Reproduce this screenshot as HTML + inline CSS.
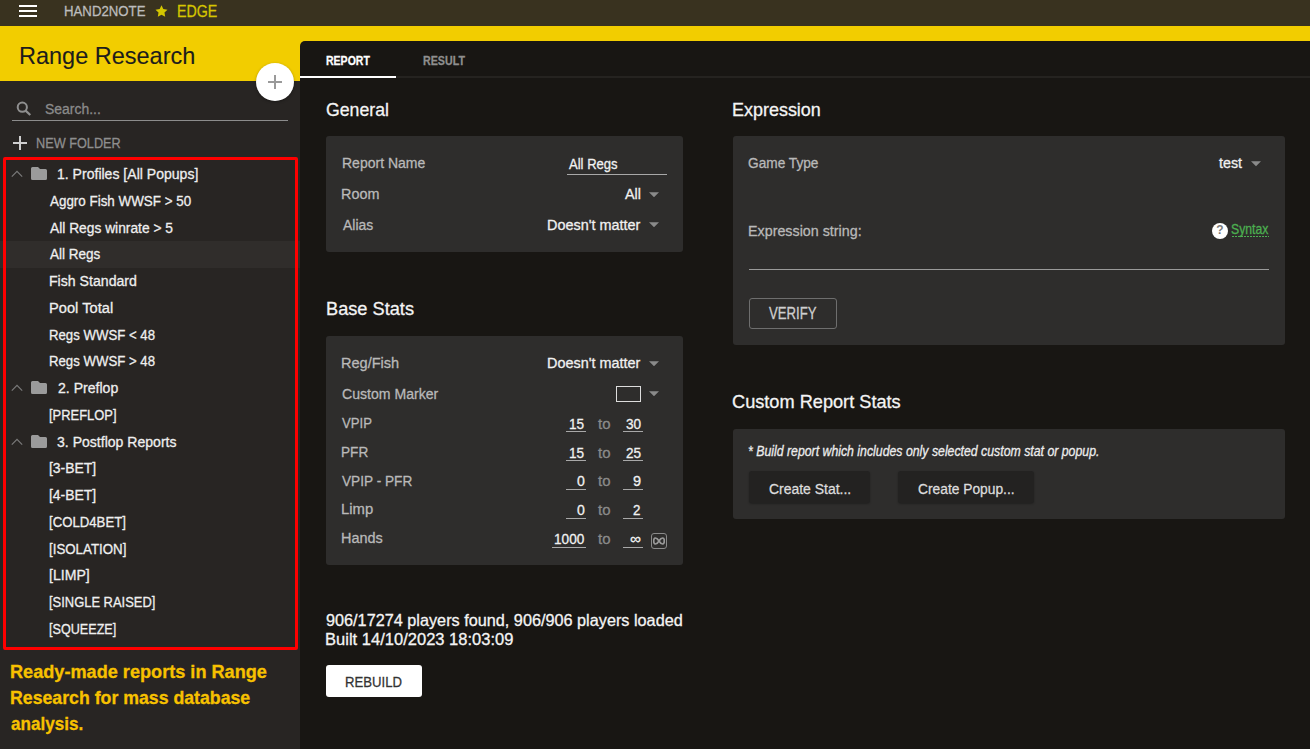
<!DOCTYPE html><html><head><meta charset="utf-8"><style>html,body{margin:0;padding:0}body{width:1310px;height:749px;overflow:hidden;position:relative;background:#181613;font-family:"Liberation Sans",sans-serif}.t{position:absolute;white-space:nowrap;transform-origin:0 0;-webkit-text-stroke:0.3px currentColor}</style></head><body>

<div style="position:absolute;left:0;top:0;width:1310px;height:26px;background:#39321f"></div>
<div style="position:absolute;left:19px;top:5px;width:18px;height:2px;background:#fff"></div>
<div style="position:absolute;left:19px;top:10px;width:18px;height:2px;background:#fff"></div>
<div style="position:absolute;left:19px;top:15px;width:18px;height:2px;background:#fff"></div>
<svg style="position:absolute;left:155px;top:5px" width="13" height="12" viewBox="0 0 24 23"><path d="M12 0.5l3.5 7.3 8 1.1-5.8 5.6 1.4 8L12 18.7l-7.1 3.8 1.4-8L0.5 8.9l8-1.1z" fill="#d4c600"/></svg>
<div style="position:absolute;left:0;top:26px;width:1310px;height:55px;background:#f2cd00"></div>
<div style="position:absolute;left:0;top:81px;width:300px;height:668px;background:#282523"></div>
<div style="position:absolute;left:300px;top:41px;width:1010px;height:708px;background:#181613;border-top-left-radius:5px"></div>
<div style="position:absolute;left:396px;top:76px;width:914px;height:2px;background:#252320"></div>
<div style="position:absolute;left:300px;top:76px;width:96px;height:2px;background:#ffffff"></div>
<div style="position:absolute;left:256px;top:63px;width:38px;height:38px;border-radius:50%;background:#fff;box-shadow:0 1px 3px rgba(0,0,0,.35)"></div>
<div style="position:absolute;left:268px;top:81.2px;width:14px;height:1.6px;background:#9a9a9a"></div>
<div style="position:absolute;left:274.2px;top:75px;width:1.6px;height:14px;background:#9a9a9a"></div>
<svg style="position:absolute;left:16px;top:101px" width="16" height="15" viewBox="0 0 16 15"><circle cx="6.3" cy="6.2" r="4.6" stroke="#8f8f8f" stroke-width="2" fill="none"/><path d="M9.6 9.6L14.3 14" stroke="#8f8f8f" stroke-width="2.2"/></svg>
<div style="position:absolute;left:12px;top:120px;width:276px;height:1px;background:#8c8c8c"></div>
<div style="position:absolute;left:13px;top:142px;width:14px;height:1.6px;background:#cfcfcf"></div>
<div style="position:absolute;left:19.2px;top:136px;width:1.6px;height:14px;background:#cfcfcf"></div>
<div style="position:absolute;left:0;top:241px;width:300px;height:27px;background:#302d2b"></div>
<div style="position:absolute;left:3px;top:157px;width:289px;height:487px;border:3px solid #ff0000;border-radius:2px"></div>
<svg style="position:absolute;left:11px;top:170.00px" width="12" height="8" viewBox="0 0 12 8"><path d="M0.8 6.6L6 1.4l5.2 5.2" stroke="#7a7a7a" stroke-width="1.2" fill="none"/></svg>
<svg style="position:absolute;left:31px;top:167.00px" width="16" height="13" viewBox="0 0 16 13"><path d="M1.5 0h5.5l2 2h5.5a1.5 1.5 0 0 1 1.5 1.5v8a1.5 1.5 0 0 1-1.5 1.5h-13A1.5 1.5 0 0 1 0 11.5v-10A1.5 1.5 0 0 1 1.5 0z" fill="#9b9b9b"/></svg>
<svg style="position:absolute;left:11px;top:384.00px" width="12" height="8" viewBox="0 0 12 8"><path d="M0.8 6.6L6 1.4l5.2 5.2" stroke="#7a7a7a" stroke-width="1.2" fill="none"/></svg>
<svg style="position:absolute;left:31px;top:381.00px" width="16" height="13" viewBox="0 0 16 13"><path d="M1.5 0h5.5l2 2h5.5a1.5 1.5 0 0 1 1.5 1.5v8a1.5 1.5 0 0 1-1.5 1.5h-13A1.5 1.5 0 0 1 0 11.5v-10A1.5 1.5 0 0 1 1.5 0z" fill="#9b9b9b"/></svg>
<svg style="position:absolute;left:11px;top:437.50px" width="12" height="8" viewBox="0 0 12 8"><path d="M0.8 6.6L6 1.4l5.2 5.2" stroke="#7a7a7a" stroke-width="1.2" fill="none"/></svg>
<svg style="position:absolute;left:31px;top:434.50px" width="16" height="13" viewBox="0 0 16 13"><path d="M1.5 0h5.5l2 2h5.5a1.5 1.5 0 0 1 1.5 1.5v8a1.5 1.5 0 0 1-1.5 1.5h-13A1.5 1.5 0 0 1 0 11.5v-10A1.5 1.5 0 0 1 1.5 0z" fill="#9b9b9b"/></svg>

<div style="position:absolute;left:326px;top:136px;width:357px;height:116px;background:#2e2d2c;border-radius:3px"></div>
<div style="position:absolute;left:567px;top:174px;width:100px;height:1px;background:#a8a8a8"></div>
<div style="position:absolute;left:326px;top:336px;width:357px;height:229px;background:#2e2d2c;border-radius:3px"></div>
<div style="position:absolute;left:616px;top:386px;width:23px;height:14px;border:1px solid #dddddd"></div>
<div style="position:absolute;left:326px;top:665px;width:96px;height:32px;background:#ffffff;border-radius:3px"></div>
<div style="position:absolute;left:733px;top:136px;width:552px;height:209px;background:#2e2d2c;border-radius:3px"></div>
<div style="position:absolute;left:749px;top:269px;width:520px;height:1px;background:#9a9a9a"></div>
<div style="position:absolute;left:1212px;top:223px;width:16px;height:16px;border-radius:50%;background:#ffffff"></div>
<div style="position:absolute;left:1212px;top:223px;width:16px;height:16px;line-height:16px;text-align:center;font:700 12px 'Liberation Sans',sans-serif;color:#7a7a7a">?</div>
<div style="position:absolute;left:1232px;top:236px;width:37px;height:1px;background:repeating-linear-gradient(90deg,#4caf50 0 2px,transparent 2px 3px)"></div>
<div style="position:absolute;left:749px;top:298px;width:86px;height:29px;border:1px solid #6e6e6e;border-radius:3px"></div>
<div style="position:absolute;left:733px;top:429px;width:552px;height:90px;background:#2e2d2c;border-radius:3px"></div>
<div style="position:absolute;left:748.5px;top:471px;width:121px;height:32px;background:#232221;border-radius:3px;box-shadow:0 1px 2px rgba(0,0,0,.3)"></div>
<div style="position:absolute;left:897.5px;top:471px;width:136px;height:32px;background:#232221;border-radius:3px;box-shadow:0 1px 2px rgba(0,0,0,.3)"></div>
<div style="position:absolute;left:651px;top:533px;width:14px;height:14px;border:1px solid #8a8a8a;border-radius:3px"></div>
<svg style="position:absolute;left:649px;top:191.7px" width="10" height="5.5" viewBox="0 0 10 5"><path d="M0 0h10L5 5z" fill="#8a8a8a"/></svg>
<svg style="position:absolute;left:649px;top:221.8px" width="10" height="5.5" viewBox="0 0 10 5"><path d="M0 0h10L5 5z" fill="#8a8a8a"/></svg>
<svg style="position:absolute;left:649px;top:360.7px" width="10" height="5.5" viewBox="0 0 10 5"><path d="M0 0h10L5 5z" fill="#8a8a8a"/></svg>
<svg style="position:absolute;left:649px;top:390.7px" width="10" height="5.5" viewBox="0 0 10 5"><path d="M0 0h10L5 5z" fill="#8a8a8a"/></svg>
<svg style="position:absolute;left:1251px;top:161px" width="10" height="5.5" viewBox="0 0 10 5"><path d="M0 0h10L5 5z" fill="#8a8a8a"/></svg>
<div style="position:absolute;left:566px;top:431px;width:20px;height:1px;background:#a8a8a8"></div><div style="position:absolute;left:623px;top:431px;width:20px;height:1px;background:#a8a8a8"></div>
<div style="position:absolute;left:566px;top:460px;width:20px;height:1px;background:#a8a8a8"></div><div style="position:absolute;left:623px;top:460px;width:20px;height:1px;background:#a8a8a8"></div>
<div style="position:absolute;left:566px;top:489px;width:20px;height:1px;background:#a8a8a8"></div><div style="position:absolute;left:623px;top:489px;width:20px;height:1px;background:#a8a8a8"></div>
<div style="position:absolute;left:566px;top:518px;width:20px;height:1px;background:#a8a8a8"></div><div style="position:absolute;left:623px;top:518px;width:20px;height:1px;background:#a8a8a8"></div>
<div style="position:absolute;left:552px;top:547px;width:34px;height:1px;background:#a8a8a8"></div><div style="position:absolute;left:623px;top:547px;width:20px;height:1px;background:#a8a8a8"></div>
<svg style="position:absolute;left:653px;top:537px" width="12" height="8" viewBox="0 0 12 8"><path d="M6 4C4.5 1.5 3.2 1 2.3 1 1.3 1 .7 2.2.7 4s.6 3 1.6 3C3.2 7 4.5 6.5 6 4s2.8-3 3.7-3c1 0 1.6 1.2 1.6 3s-.6 3-1.6 3C8.8 7 7.5 6.5 6 4z" stroke="#9a9a9a" stroke-width="1.7" fill="none"/></svg>

<div class="t" id="t0" style="left:63.54px;top:3.10px;font-size:15.5px;line-height:15.5px;color:#bcbcbc;transform:scaleX(0.8522);">HAND2NOTE</div>
<div class="t" id="t1" style="left:177.03px;top:3.01px;font-size:16.5px;line-height:16.5px;color:#d6c600;transform:scaleX(0.8605);">EDGE</div>
<div class="t" id="t2" style="left:19.03px;top:43.90px;font-size:24px;line-height:24px;color:#1c1c1c;-webkit-text-stroke:0.1px currentColor;transform:scaleX(0.9790);">Range Research</div>
<div class="t" id="t3" style="left:44.65px;top:101.00px;font-size:15.5px;line-height:15.5px;color:#8b8b8b;transform:scaleX(0.8988);">Search...</div>
<div class="t" id="t4" style="left:35.90px;top:135.01px;font-size:15.5px;line-height:15.5px;color:#8e8e8e;transform:scaleX(0.8200);">NEW FOLDER</div>
<div class="t" id="t5" style="left:56.79px;top:166.01px;font-size:15.5px;line-height:15.5px;color:#efefef;transform:scaleX(0.9062);">1. Profiles [All Popups]</div>
<div class="t" id="t6" style="left:50.29px;top:192.76px;font-size:15.5px;line-height:15.5px;color:#efefef;transform:scaleX(0.8646);">Aggro Fish WWSF &gt; 50</div>
<div class="t" id="t7" style="left:50.30px;top:219.51px;font-size:15.5px;line-height:15.5px;color:#efefef;transform:scaleX(0.8894);">All Regs winrate &gt; 5</div>
<div class="t" id="t8" style="left:50.29px;top:246.26px;font-size:15.5px;line-height:15.5px;color:#efefef;transform:scaleX(0.8720);">All Regs</div>
<div class="t" id="t9" style="left:49.32px;top:273.01px;font-size:15.5px;line-height:15.5px;color:#efefef;transform:scaleX(0.9107);">Fish Standard</div>
<div class="t" id="t10" style="left:49.33px;top:299.76px;font-size:15.5px;line-height:15.5px;color:#efefef;transform:scaleX(0.9462);">Pool Total</div>
<div class="t" id="t11" style="left:49.39px;top:326.51px;font-size:15.5px;line-height:15.5px;color:#efefef;transform:scaleX(0.8514);">Regs WWSF &lt; 48</div>
<div class="t" id="t12" style="left:49.39px;top:353.26px;font-size:15.5px;line-height:15.5px;color:#efefef;transform:scaleX(0.8514);">Regs WWSF &gt; 48</div>
<div class="t" id="t13" style="left:58.10px;top:380.01px;font-size:15.5px;line-height:15.5px;color:#efefef;transform:scaleX(0.9084);">2. Preflop</div>
<div class="t" id="t14" style="left:49.42px;top:406.76px;font-size:15.5px;line-height:15.5px;color:#efefef;transform:scaleX(0.8343);">[PREFLOP]</div>
<div class="t" id="t15" style="left:56.94px;top:433.51px;font-size:15.5px;line-height:15.5px;color:#efefef;transform:scaleX(0.9067);">3. Postflop Reports</div>
<div class="t" id="t16" style="left:49.34px;top:460.26px;font-size:15.5px;line-height:15.5px;color:#efefef;transform:scaleX(0.8991);">[3-BET]</div>
<div class="t" id="t17" style="left:49.34px;top:487.01px;font-size:15.5px;line-height:15.5px;color:#efefef;transform:scaleX(0.8991);">[4-BET]</div>
<div class="t" id="t18" style="left:49.42px;top:513.75px;font-size:15.5px;line-height:15.5px;color:#efefef;transform:scaleX(0.8505);">[COLD4BET]</div>
<div class="t" id="t19" style="left:49.42px;top:540.50px;font-size:15.5px;line-height:15.5px;color:#efefef;transform:scaleX(0.8579);">[ISOLATION]</div>
<div class="t" id="t20" style="left:49.34px;top:567.25px;font-size:15.5px;line-height:15.5px;color:#efefef;transform:scaleX(0.9090);">[LIMP]</div>
<div class="t" id="t21" style="left:49.43px;top:594.00px;font-size:15.5px;line-height:15.5px;color:#efefef;transform:scaleX(0.8340);">[SINGLE RAISED]</div>
<div class="t" id="t22" style="left:49.43px;top:620.75px;font-size:15.5px;line-height:15.5px;color:#efefef;transform:scaleX(0.8136);">[SQUEEZE]</div>
<div class="t" id="t23" style="left:10.27px;top:661.91px;font-size:19px;line-height:19px;color:#f7c100;font-weight:700;transform:scaleX(0.9543);">Ready-made reports in Range</div>
<div class="t" id="t24" style="left:10.30px;top:687.81px;font-size:19px;line-height:19px;color:#f7c100;font-weight:700;transform:scaleX(0.9321);">Research for mass database</div>
<div class="t" id="t25" style="left:11.25px;top:713.51px;font-size:19px;line-height:19px;color:#f7c100;font-weight:700;transform:scaleX(0.8990);">analysis.</div>
<div class="t" id="t26" style="left:326.42px;top:54.11px;font-size:13px;line-height:13px;color:#ffffff;font-weight:700;transform:scaleX(0.8091);">REPORT</div>
<div class="t" id="t27" style="left:422.85px;top:54.11px;font-size:13px;line-height:13px;color:#8e8e8e;font-weight:700;transform:scaleX(0.8214);">RESULT</div>
<div class="t" id="t28" style="left:325.53px;top:99.81px;font-size:19px;line-height:19px;color:#f4f4f4;transform:scaleX(0.9307);">General</div>
<div class="t" id="t29" style="left:341.69px;top:155.21px;font-size:15.5px;line-height:15.5px;color:#b9b9b9;transform:scaleX(0.9031);">Report Name</div>
<div class="t" id="t30" style="left:340.68px;top:186.10px;font-size:15.5px;line-height:15.5px;color:#b9b9b9;transform:scaleX(0.9288);">Room</div>
<div class="t" id="t31" style="left:342.60px;top:217.21px;font-size:15.5px;line-height:15.5px;color:#b9b9b9;transform:scaleX(0.8981);">Alias</div>
<div class="t" id="t32" style="left:568.70px;top:155.91px;font-size:15.5px;line-height:15.5px;color:#f1f1f1;transform:scaleX(0.8420);">All Regs</div>
<div class="t" id="t33" style="left:625.30px;top:185.71px;font-size:15.5px;line-height:15.5px;color:#f1f1f1;transform:scaleX(0.9262);">All</div>
<div class="t" id="t34" style="left:546.90px;top:216.51px;font-size:15.5px;line-height:15.5px;color:#f1f1f1;transform:scaleX(0.9293);">Doesn't matter</div>
<div class="t" id="t35" style="left:325.87px;top:299.01px;font-size:19px;line-height:19px;color:#f4f4f4;transform:scaleX(0.9578);">Base Stats</div>
<div class="t" id="t36" style="left:341.29px;top:354.71px;font-size:15.5px;line-height:15.5px;color:#b9b9b9;transform:scaleX(0.9381);">Reg/Fish</div>
<div class="t" id="t37" style="left:342.39px;top:385.71px;font-size:15.5px;line-height:15.5px;color:#b9b9b9;transform:scaleX(0.9084);">Custom Marker</div>
<div class="t" id="t38" style="left:342.32px;top:415.31px;font-size:15.5px;line-height:15.5px;color:#b9b9b9;transform:scaleX(0.8475);">VPIP</div>
<div class="t" id="t39" style="left:341.35px;top:443.91px;font-size:15.5px;line-height:15.5px;color:#b9b9b9;transform:scaleX(0.8797);">PFR</div>
<div class="t" id="t40" style="left:342.31px;top:472.81px;font-size:15.5px;line-height:15.5px;color:#b9b9b9;transform:scaleX(0.8808);">VPIP - PFR</div>
<div class="t" id="t41" style="left:341.26px;top:501.10px;font-size:15.5px;line-height:15.5px;color:#b9b9b9;transform:scaleX(0.9572);">Limp</div>
<div class="t" id="t42" style="left:341.31px;top:529.90px;font-size:15.5px;line-height:15.5px;color:#b9b9b9;transform:scaleX(0.9315);">Hands</div>
<div class="t" id="t43" style="left:546.90px;top:354.81px;font-size:15.5px;line-height:15.5px;color:#f1f1f1;transform:scaleX(0.9293);">Doesn't matter</div>
<div class="t" id="t44" style="left:568.95px;top:415.71px;font-size:15.5px;line-height:15.5px;color:#f1f1f1;transform:scaleX(0.8756);">15</div>
<div class="t" id="t45" style="left:598.00px;top:415.71px;font-size:15.5px;line-height:15.5px;color:#8a8a8a;transform:scaleX(0.9658);">to</div>
<div class="t" id="t46" style="left:626.07px;top:415.71px;font-size:15.5px;line-height:15.5px;color:#f1f1f1;transform:scaleX(0.8764);">30</div>
<div class="t" id="t47" style="left:568.95px;top:444.60px;font-size:15.5px;line-height:15.5px;color:#f1f1f1;transform:scaleX(0.8756);">15</div>
<div class="t" id="t48" style="left:598.00px;top:444.60px;font-size:15.5px;line-height:15.5px;color:#8a8a8a;transform:scaleX(0.9658);">to</div>
<div class="t" id="t49" style="left:626.07px;top:444.60px;font-size:15.5px;line-height:15.5px;color:#f1f1f1;transform:scaleX(0.8764);">25</div>
<div class="t" id="t50" style="left:576.57px;top:473.21px;font-size:15.5px;line-height:15.5px;color:#f1f1f1;transform:scaleX(0.9077);">0</div>
<div class="t" id="t51" style="left:598.00px;top:473.21px;font-size:15.5px;line-height:15.5px;color:#8a8a8a;transform:scaleX(0.9658);">to</div>
<div class="t" id="t52" style="left:632.97px;top:473.21px;font-size:15.5px;line-height:15.5px;color:#f1f1f1;transform:scaleX(0.9365);">9</div>
<div class="t" id="t53" style="left:576.57px;top:501.81px;font-size:15.5px;line-height:15.5px;color:#f1f1f1;transform:scaleX(0.9077);">0</div>
<div class="t" id="t54" style="left:598.00px;top:501.81px;font-size:15.5px;line-height:15.5px;color:#8a8a8a;transform:scaleX(0.9658);">to</div>
<div class="t" id="t55" style="left:632.88px;top:501.81px;font-size:15.5px;line-height:15.5px;color:#f1f1f1;transform:scaleX(0.8621);">2</div>
<div class="t" id="t56" style="left:554.19px;top:530.81px;font-size:15.5px;line-height:15.5px;color:#f1f1f1;transform:scaleX(0.8774);">1000</div>
<div class="t" id="t57" style="left:598.00px;top:530.81px;font-size:15.5px;line-height:15.5px;color:#8a8a8a;transform:scaleX(0.9658);">to</div>
<div class="t" id="t58" style="left:630.08px;top:530.81px;font-size:15.5px;line-height:15.5px;color:#f1f1f1;transform:scaleX(1.0023);">∞</div>
<div class="t" id="t59" style="left:326.21px;top:612.01px;font-size:16.5px;line-height:16.5px;color:#f4f4f4;transform:scaleX(0.9845);">906/17274 players found, 906/906 players loaded</div>
<div class="t" id="t60" style="left:325.20px;top:630.61px;font-size:16.5px;line-height:16.5px;color:#f4f4f4;transform:scaleX(1.0022);">Built 14/10/2023 18:03:09</div>
<div class="t" id="t61" style="left:345.31px;top:674.00px;font-size:15.5px;line-height:15.5px;color:#333333;transform:scaleX(0.8476);">REBUILD</div>
<div class="t" id="t62" style="left:732.28px;top:100.41px;font-size:19px;line-height:19px;color:#f4f4f4;transform:scaleX(0.9452);">Expression</div>
<div class="t" id="t63" style="left:748.43px;top:154.81px;font-size:15.5px;line-height:15.5px;color:#b9b9b9;transform:scaleX(0.8826);">Game Type</div>
<div class="t" id="t64" style="left:1219.29px;top:154.60px;font-size:15.5px;line-height:15.5px;color:#f1f1f1;transform:scaleX(0.9210);">test</div>
<div class="t" id="t65" style="left:748.08px;top:223.01px;font-size:15.5px;line-height:15.5px;color:#b9b9b9;transform:scaleX(0.9222);">Expression string:</div>
<div class="t" id="t66" style="left:1230.65px;top:221.71px;font-size:14.5px;line-height:14.5px;color:#4caf50;transform:scaleX(0.8422);">Syntax</div>
<div class="t" id="t67" style="left:769.20px;top:306.11px;font-size:16px;line-height:16px;color:#cfcfcf;transform:scaleX(0.8220);">VERIFY</div>
<div class="t" id="t68" style="left:732.04px;top:392.01px;font-size:19px;line-height:19px;color:#f4f4f4;transform:scaleX(0.9566);">Custom Report Stats</div>
<div class="t" id="t69" style="left:748.16px;top:444.40px;font-size:14.5px;line-height:14.5px;color:#ececec;font-style:italic;transform:scaleX(0.8482);">* Build report which includes only selected custom stat or popup.</div>
<div class="t" id="t70" style="left:768.55px;top:480.71px;font-size:15.5px;line-height:15.5px;color:#dcdcdc;transform:scaleX(0.9001);">Create Stat...</div>
<div class="t" id="t71" style="left:918.13px;top:480.71px;font-size:15.5px;line-height:15.5px;color:#dcdcdc;transform:scaleX(0.8899);">Create Popup...</div>
</body></html>
